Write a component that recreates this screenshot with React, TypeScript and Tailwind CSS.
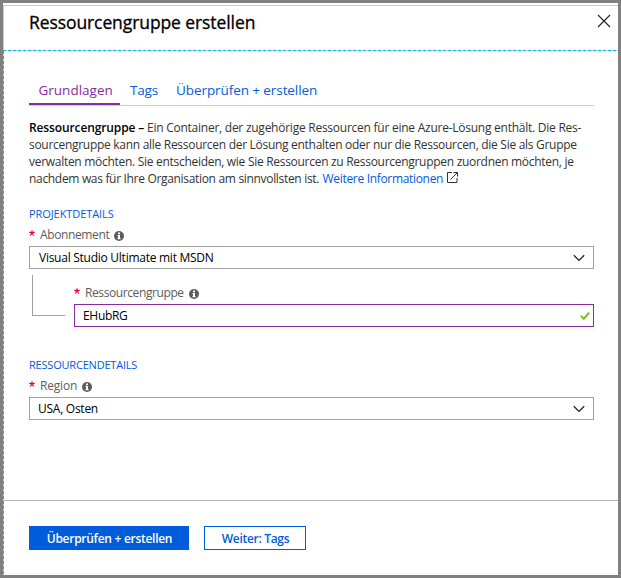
import type { ReactNode } from "react";

function InfoIcon() {
  return (
    <svg width="10" height="10" viewBox="0 0 10 10" className="mt-[2px] shrink-0">
      <circle cx="5" cy="5" r="5" fill="#5c5c5c" />
      <path d="M4 1.6h2v1.6H4zM3.5 4H6v3.2h.7v1H3.4v-1H4V5h-.5z" fill="#fff" />
    </svg>
  );
}

function Chevron() {
  return (
    <svg width="12" height="8" viewBox="0 0 12 8" className="mr-[8px]" fill="none">
      <path d="M.8 1.2 6 6.4l5.2-5.2" stroke="#222" strokeWidth="1.3" />
    </svg>
  );
}

function Label({ children, className = "" }: { children: ReactNode; className?: string }) {
  return (
    <div className={`flex h-[16px] items-center text-[12px] leading-[16px] text-[#5c5c5c] ${className}`}>
      <svg width="6" height="6" viewBox="0 0 6 6" className="mr-[5px] mb-[4px] shrink-0">
        <path
          d="M3 3V.2M3 3 .3 2.1M3 3l2.7-.9M3 3 1.3 5.5M3 3l1.7 2.5"
          stroke="#e3002d"
          strokeWidth="1.2"
          fill="none"
        />
      </svg>
      <span className="mr-[5px]">{children}</span>
      <InfoIcon />
    </div>
  );
}

function Select({ children, className = "" }: { children: ReactNode; className?: string }) {
  return (
    <div
      className={`flex h-[23px] items-center justify-between border border-[#a0a0a0] text-[12px] leading-[21px] tracking-[-0.26px] text-black ${className}`}
    >
      <span>{children}</span>
      <Chevron />
    </div>
  );
}

export default function App() {
  return (
    <div className="flex h-[578px] w-[621px] flex-col overflow-hidden border-[3px] border-[#808080] bg-white pt-[2px] font-['Open_Sans','Noto_Sans',sans-serif] whitespace-nowrap">
      <header className="flex h-[45px] shrink-0 justify-between border-t border-l border-[#ccc] pr-[7px] pl-[25px]">
        <h1 className="mt-[4px] text-[17.5px] leading-[24px] font-medium tracking-[-0.09px] text-black [-webkit-text-stroke:0.3px_#000]">
          Ressourcengruppe erstellen
        </h1>
        <svg width="14" height="14" viewBox="0 0 14 14" className="mt-[8px]" fill="none">
          <path d="M1 1l12 12M13 1 1 13" stroke="#222" strokeWidth="1.1" />
        </svg>
      </header>
      <div className="h-px shrink-0 bg-[repeating-linear-gradient(90deg,#00bcf2_0_3px,#d0d0d0_3px_5px)]" />

      <div className="flex min-h-0 flex-1">
        <div className="w-px shrink-0 bg-[repeating-linear-gradient(180deg,#00bcf2_0_3px,#d0d0d0_3px_5px)]" />
        <div className="flex flex-1 flex-col">
          <main className="flex h-[449px] flex-col pr-[24px] pl-[25px]">
            <nav className="mt-[26px] flex h-[29px] shrink-0 border-b border-[#ccc] text-[13.5px] leading-[26px] text-[#015cda]">
              <span className="h-[28px] w-[91px] border-b-2 border-[#892ba4] pl-[9.5px] text-[#892ba4]">
                Grundlagen
              </span>
              <span className="ml-[10px] w-[46px] tracking-[-0.2px]">Tags</span>
              <span className="tracking-[-0.08px]">Überprüfen + erstellen</span>
            </nav>

            <p className="mt-[13px] text-[12px] leading-[17px] text-[#333]">
              <span className="block tracking-[-0.25px]">
                <b className="font-semibold tracking-[-0.12px] text-black">Ressourcengruppe –</b> Ein Container, der
                zugehörige Ressourcen für eine Azure-Lösung enthält. Die Res-
              </span>
              <span className="block tracking-[-0.29px]">
                sourcengruppe kann alle Ressourcen der Lösung enthalten oder nur die Ressourcen, die Sie als Gruppe
              </span>
              <span className="block tracking-[-0.29px]">
                verwalten möchten. Sie entscheiden, wie Sie Ressourcen zu Ressourcengruppen zuordnen möchten, je
              </span>
              <span className="flex tracking-[-0.32px]">
                nachdem was für Ihre Organisation am sinnvollsten ist.
                <a className="ml-[3.5px] text-[#015cda]">Weitere Informationen</a>
                <svg width="11" height="11" viewBox="0 0 11 11" className="mt-[2px] ml-[4px]" fill="none" stroke="#333">
                  <path d="M5 .5H.5v10h9.5V6M6.5.5h4v4M10.5.5 3.5 7.5" />
                </svg>
              </span>
            </p>

            <h2 className="mt-[19px] text-[11px] leading-[16px] tracking-[-0.08px] text-[#015cda]">PROJEKTDETAILS</h2>
            <Label className="mt-[5px] tracking-[-0.38px]">Abonnement</Label>
            <Select className="mt-[3px] pl-[9px]">Visual Studio Ultimate mit MSDN</Select>

            <div className="flex">
              <div className="mt-[6px] ml-[3px] h-[41px] w-[33px] border-b border-l border-[#a0a0a0]" />
              <div className="ml-[9px] flex-1 pt-[16px]">
                <Label className="tracking-[-0.4px]">Ressourcengruppe</Label>
                <div className="mt-[3px] flex h-[23px] items-center justify-between border border-[#892ba4] pl-[8px] text-[12px] leading-[21px] tracking-[-0.3px] text-black">
                  <span>EHubRG</span>
                  <svg width="10" height="8" viewBox="0 0 10 8" className="mr-[3px]" fill="none">
                    <path d="M.8 3.8 3.8 6.7 9.2.8" stroke="#7fba2f" strokeWidth="2" />
                  </svg>
                </div>
              </div>
            </div>

            <h2 className="mt-[30px] text-[11px] leading-[16px] tracking-[-0.2px] text-[#015cda]">
              RESSOURCENDETAILS
            </h2>
            <Label className="mt-[5px] tracking-[-0.2px]">Region</Label>
            <Select className="mt-[3px] pl-[8px]">USA, Osten</Select>
          </main>

          <footer className="flex flex-1 gap-[15px] border-t border-[#b4b4b4] pt-[25px] pl-[25px] text-[12px] leading-[22px] font-semibold">
            <button className="h-[24px] w-[160px] bg-[#015cda] pt-[2px] pl-px tracking-[-0.28px] text-white">
              Überprüfen + erstellen
            </button>
            <button className="h-[24px] w-[102px] border border-[#015cda] pt-px pl-px tracking-[-0.3px] text-[#015cda]">
              Weiter: Tags
            </button>
          </footer>
        </div>
      </div>
    </div>
  );
}
